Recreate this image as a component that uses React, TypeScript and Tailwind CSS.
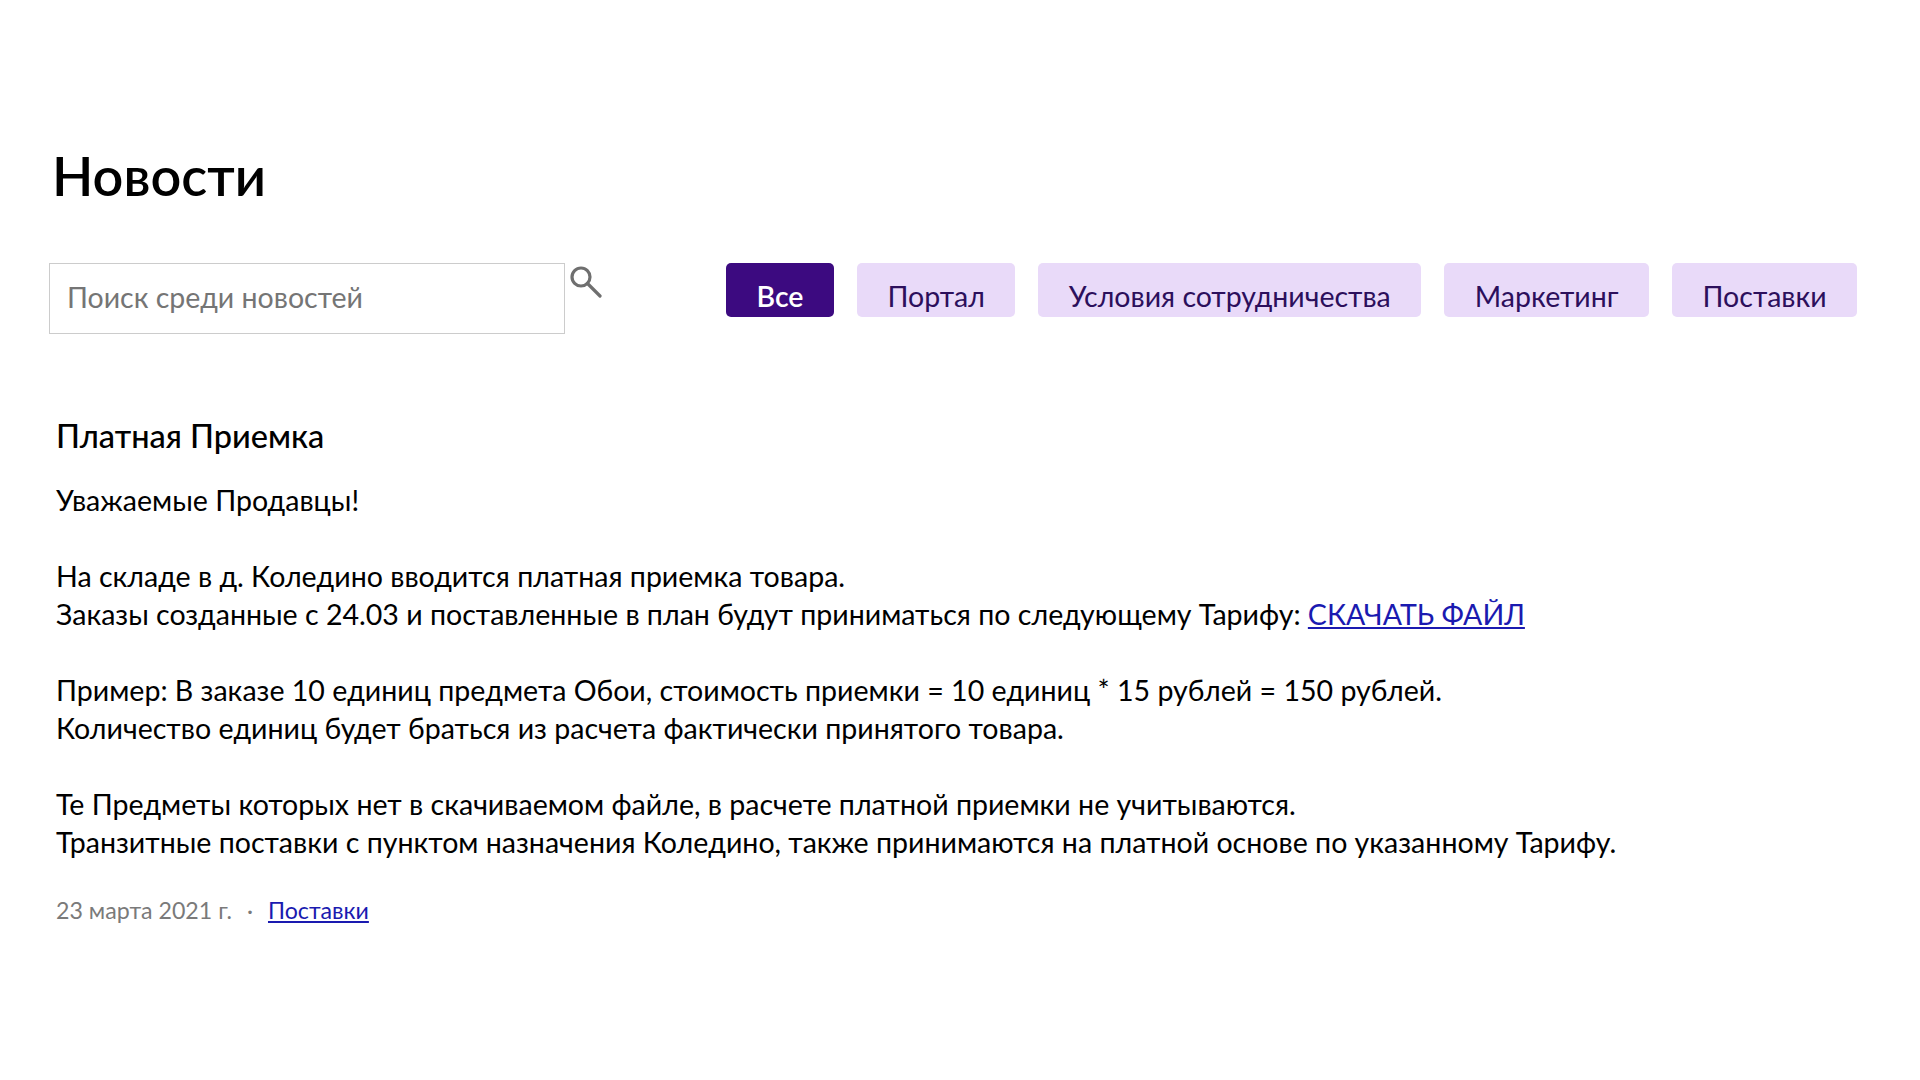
const categories = ['Портал', 'Условия сотрудничества', 'Маркетинг', 'Поставки'];

export default function App() {
  return (
    <div className="min-h-[1080px] bg-white pl-[49px] pt-[144px] font-['Lato','Noto_Sans',sans-serif] text-black">
      {/* Header */}
      <h1 className="ml-[3px] text-[54px] leading-[64px] font-semibold">Новости</h1>

      {/* Search and filters */}
      <div className="mt-[55px] flex items-start">
        <input
          placeholder="Поиск среди новостей"
          className="h-[71px] w-[516px] border border-[#cccccc] px-[17px] pb-[4px] text-[28.5px] outline-none placeholder:text-[#757575]"
        />
        <svg viewBox="0 0 32 32" fill="none" stroke="#6f6f6f" strokeWidth={3.2} className="mt-[3px] ml-[5px] h-[32px] w-[32px]">
          <circle cx="11" cy="11" r="9" />
          <path d="M17.5 17.5 30 30" strokeLinecap="round" />
        </svg>
        <div className="ml-[124px] flex gap-[23px]">
          <button className="h-[54px] rounded-[5px] bg-[#3c0a80] px-[30.5px] pt-[12px] text-[28.5px] font-semibold text-white">Все</button>
          {categories.map((c) => (
            <button key={c} className="h-[54px] rounded-[5px] bg-[#e9daf9] px-[30.5px] pt-[12px] text-[28.5px] text-[#2c0f5c]">
              {c}
            </button>
          ))}
        </div>
      </div>

      {/* News item */}
      <div className="mt-[83px] ml-[7px]">
        <h2 className="text-[32.5px] leading-[38px] font-medium">Платная Приемка</h2>
        <div className="mt-[26px] text-[28.55px] leading-[38px]">
          <p>Уважаемые Продавцы!</p>
          <p className="mt-[38px]">На складе в д. Коледино вводится платная приемка товара.</p>
          <p>
            Заказы созданные с 24.03 и поставленные в план будут приниматься по следующему Тарифу:{' '}
            <a href="#" className="text-[#1a1ab0] underline">СКАЧАТЬ ФАЙЛ</a>
          </p>
          <p className="mt-[38px]">Пример: В заказе 10 единиц предмета Обои, стоимость приемки = 10 единиц * 15 рублей = 150 рублей.</p>
          <p>Количество единиц будет браться из расчета фактически принятого товара.</p>
          <p className="mt-[38px]">Те Предметы которых нет в скачиваемом файле, в расчете платной приемки не учитываются.</p>
          <p>Транзитные поставки с пунктом назначения Коледино, также принимаются на платной основе по указанному Тарифу.</p>
        </div>
        <div className="mt-[35px] flex items-center text-[23.2px] leading-[28px] text-[#7a7a7a]">
          <span>23 марта 2021 г.</span>
          <span className="mx-[15px]">·</span>
          <a href="#" className="text-[#1a1ab0] underline">Поставки</a>
        </div>
      </div>
    </div>
  );
}
